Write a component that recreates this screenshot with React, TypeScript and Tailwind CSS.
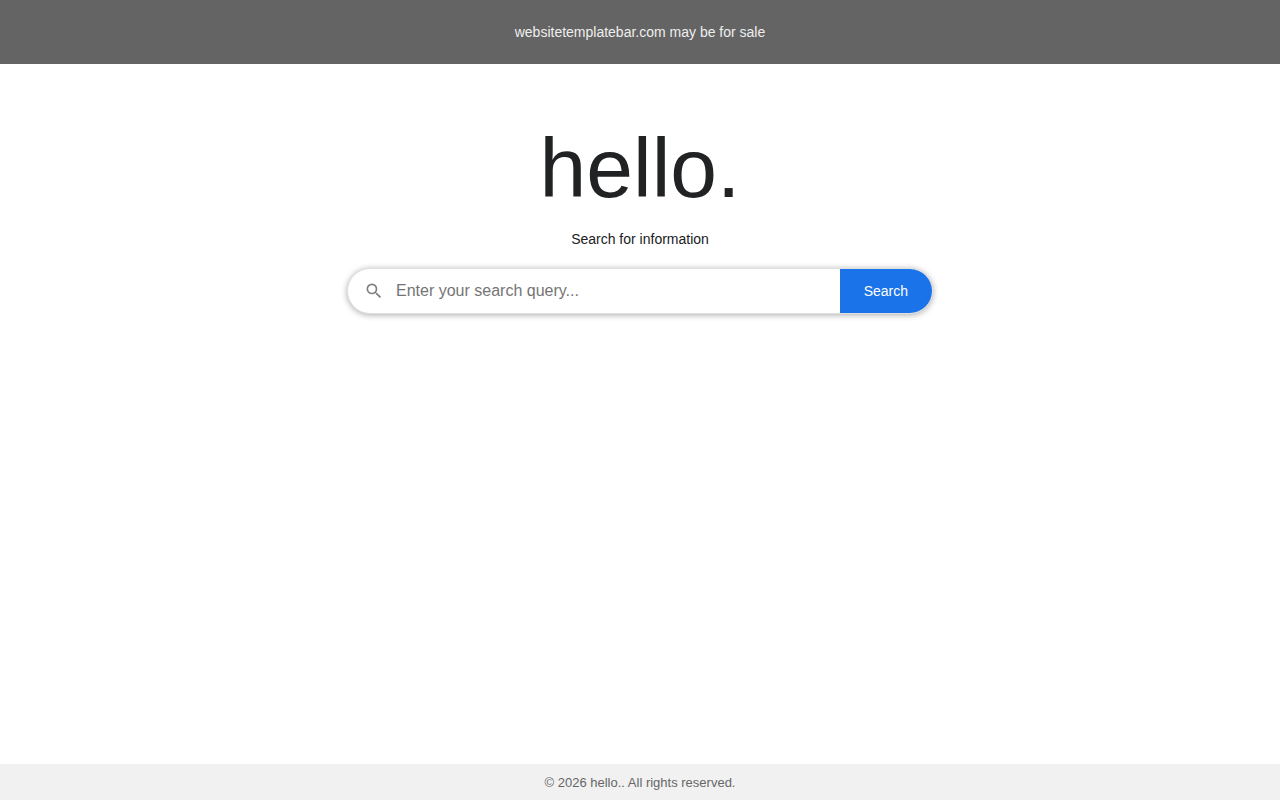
export default function App() {
  return (
    <div className="flex min-h-screen flex-col bg-white font-['Liberation_Sans',Arial,sans-serif] text-[#202124]">
      <header className="flex h-16 items-center justify-center bg-[#646464] text-sm text-[#eeeeee]">
        <a href="#sale">websitetemplatebar.com may be for sale</a>
      </header>
      <main className="flex flex-1 flex-col items-center px-5 pt-14">
        <h1 className="text-[84px] leading-24 text-[#202223]">hello.</h1>
        <p className="mt-3 text-sm leading-[22px]">Search for information</p>
        <form
          role="search"
          onSubmit={(e) => e.preventDefault()}
          className="mt-[18px] flex h-[46px] w-full max-w-[586px] items-center overflow-hidden rounded-full border border-[#dfdfdf] bg-white shadow-[0_1px_6px_rgba(0,0,0,0.33)]"
        >
          <svg viewBox="0 0 24 24" className="ml-4 size-5 shrink-0 fill-[#808080]" aria-hidden="true">
            <path d="M15.5 14h-.79l-.28-.27A6.471 6.471 0 0 0 16 9.5 6.5 6.5 0 1 0 9.5 16c1.61 0 3.09-.59 4.23-1.57l.27.28v.79l5 4.99L20.49 19l-4.99-5zm-6 0C7.01 14 5 11.99 5 9.5S7.01 5 9.5 5 14 7.01 14 9.5 11.99 14 9.5 14z" />
          </svg>
          <input
            type="text"
            aria-label="Search query"
            placeholder="Enter your search query..."
            className="h-full min-w-0 flex-1 px-3 text-base outline-none placeholder:text-[#757575]"
          />
          <button type="submit" className="h-full bg-[#1a73e8] px-6 text-sm text-white">
            Search
          </button>
        </form>
      </main>
      <footer className="flex justify-center bg-[#f1f1f1] pt-2.5 pb-2 text-[13px] leading-[18px] text-[#666666]">
        <p>© 2026 hello.. All rights reserved.</p>
      </footer>
    </div>
  );
}
